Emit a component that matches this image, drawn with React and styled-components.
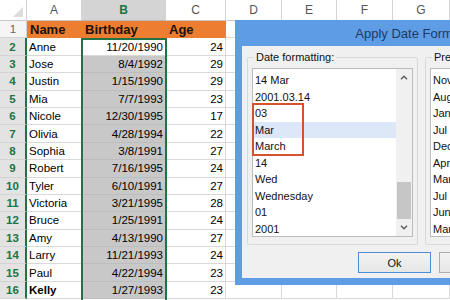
import React from "react";
import styled, { createGlobalStyle } from "styled-components";

const GlobalStyle = createGlobalStyle`
  html, body {
    margin: 0;
    padding: 0;
    background: #ffffff;
  }
  body {
    font-family: "Liberation Sans", Arial, sans-serif;
  }
`;

const columns = ["A", "B", "C", "D", "E", "F", "G"];

const people = [
  ["Anne", "11/20/1990", 24],
  ["Jose", "8/4/1992", 29],
  ["Justin", "1/15/1990", 29],
  ["Mia", "7/7/1993", 23],
  ["Nicole", "12/30/1995", 17],
  ["Olivia", "4/28/1994", 22],
  ["Sophia", "3/8/1991", 27],
  ["Robert", "7/16/1995", 24],
  ["Tyler", "6/10/1991", 27],
  ["Victoria", "3/21/1995", 28],
  ["Bruce", "1/25/1991", 24],
  ["Amy", "4/13/1990", 27],
  ["Larry", "11/21/1993", 24],
  ["Paul", "4/22/1994", 23],
  ["Kelly", "1/27/1993", 23],
];

const formats = ["14 Mar", "2001.03.14", "03", "Mar", "March", "14", "Wed", "Wednesday", "01", "2001"];
const preview = ["Nov", "Aug", "Jan", "Jul", "Dec", "Apr", "Mar", "Jul", "Jun", "Mar"];

export default function App() {
  return (
    <Page>
      <GlobalStyle />
      <Sheet>
        <Corner>
          <svg width="10" height="10" viewBox="0 0 10 10">
            <polygon points="10,0 10,10 0,10" fill="#dcdcdc" />
          </svg>
        </Corner>
        {columns.map((c) => (
          <ColHeader key={c} $active={c === "B"}>{c}</ColHeader>
        ))}

        <RowHeader>1</RowHeader>
        <TitleCell>Name</TitleCell>
        <TitleCell>Birthday</TitleCell>
        <TitleCell>Age</TitleCell>
        <Cell /><Cell /><Cell /><Cell />

        {people.map(([name, date, age], i) => (
          <React.Fragment key={name}>
            <RowHeader $active>{i + 2}</RowHeader>
            <Cell $bold={name === "Kelly"}>{name}</Cell>
            <Cell $align="right" $selected={i > 0}>{date}</Cell>
            <Cell $align="right">{age}</Cell>
            <Cell /><Cell /><Cell /><Cell />
          </React.Fragment>
        ))}
      </Sheet>
      <Selection />

      <Dialog>
        <TitleBar>Apply Date Formatting</TitleBar>
        <DialogBody>
          <Groups>
            <GroupBox>
              <GroupLabel>Date formatting:</GroupLabel>
              <ListBox>
                <ListItems>
                  {formats.map((f, i) => (
                    <ListItem key={f + i} $selected={f === "Mar"}>{f}</ListItem>
                  ))}
                </ListItems>
                <ScrollBar>
                  <ScrollArrow>
                    <svg width="8" height="5" viewBox="0 0 8 5">
                      <polyline points="1,4.2 4,1.2 7,4.2" fill="none" stroke="#5a5a5a" strokeWidth="1.4" />
                    </svg>
                  </ScrollArrow>
                  <ScrollTrack>
                    <ScrollThumb />
                  </ScrollTrack>
                  <ScrollArrow>
                    <svg width="8" height="5" viewBox="0 0 8 5">
                      <polyline points="1,0.8 4,3.8 7,0.8" fill="none" stroke="#5a5a5a" strokeWidth="1.4" />
                    </svg>
                  </ScrollArrow>
                </ScrollBar>
                <Highlight />
              </ListBox>
            </GroupBox>
            <GroupBox>
              <GroupLabel>Preview:</GroupLabel>
              <ListBox>
                <ListItems>
                  {preview.map((p, i) => (
                    <ListItem key={p + i}>{p}</ListItem>
                  ))}
                </ListItems>
              </ListBox>
            </GroupBox>
          </Groups>
          <ButtonRow>
            <Button $focused>Ok</Button>
            <Button>Apply</Button>
            <Button>Cancel</Button>
          </ButtonRow>
        </DialogBody>
      </Dialog>
    </Page>
  );
}

const Page = styled.div`
  position: relative;
  width: 450px;
  height: 300px;
  overflow: hidden;
  background: #ffffff;
`;

const Sheet = styled.div`
  display: grid;
  grid-template-columns: 27px 55px 84px 60px 56px 55px 56px 57px;
  grid-template-rows: 21px repeat(16, 17.4px);
  font-size: 11.5px;
  color: #000000;
`;

const Corner = styled.div`
  display: flex;
  align-items: flex-end;
  justify-content: flex-end;
  padding: 0 3px 3px 0;
  border-right: 1px solid #d4d4d4;
  border-bottom: 1px solid #c8c8c8;
  box-sizing: border-box;
  background: #ffffff;
`;

const ColHeader = styled.div`
  display: flex;
  align-items: center;
  justify-content: center;
  font-size: 12px;
  font-weight: ${(p) => (p.$active ? 700 : 400)};
  color: ${(p) => (p.$active ? "#217346" : "#555555")};
  background: ${(p) => (p.$active ? "#d4d4d4" : "#ffffff")};
  border-right: 1px solid #d4d4d4;
  border-bottom: 1px solid ${(p) => (p.$active ? "#b8b8b8" : "#c8c8c8")};
  box-sizing: border-box;
`;

const RowHeader = styled.div`
  display: flex;
  align-items: center;
  justify-content: center;
  font-weight: ${(p) => (p.$active ? 700 : 400)};
  color: ${(p) => (p.$active ? "#217346" : "#666666")};
  background: ${(p) => (p.$active ? "#e3e3e3" : "#f5f5f5")};
  border-right: ${(p) => (p.$active ? "2px solid #217346" : "1px solid #d4d4d4")};
  border-bottom: 1px solid #d4d4d4;
  box-sizing: border-box;
`;

const TitleCell = styled.div`
  display: flex;
  align-items: center;
  padding: 0 0 0 3px;
  font-size: 13px;
  font-weight: 700;
  color: #1c1208;
  background: #ed7d31;
  box-sizing: border-box;
`;

const Cell = styled.div`
  display: flex;
  align-items: center;
  justify-content: ${(p) => (p.$align === "right" ? "flex-end" : "flex-start")};
  padding: 0 2px;
  font-weight: ${(p) => (p.$bold ? 700 : 400)};
  background: ${(p) => (p.$selected ? "#c8c8c8" : "#ffffff")};
  border-right: 1px solid ${(p) => (p.$selected ? "#bdbdbd" : "#d9d9d9")};
  border-bottom: 1px solid ${(p) => (p.$selected ? "#bdbdbd" : "#d9d9d9")};
  white-space: nowrap;
  box-sizing: border-box;
`;

const Selection = styled.div`
  position: absolute;
  left: 81px;
  top: 37.5px;
  width: 86px;
  height: 280px;
  border: 2px solid #217346;
  box-sizing: border-box;
  pointer-events: none;
`;

const Dialog = styled.div`
  position: absolute;
  left: 235px;
  top: 20px;
  width: 370px;
  height: 265px;
  display: flex;
  flex-direction: column;
  padding: 0 7px 7px 7px;
  box-sizing: border-box;
  background: #5e9de6;
  font-family: "Liberation Sans", Arial, sans-serif;
`;

const TitleBar = styled.div`
  height: 26px;
  display: flex;
  align-items: center;
  justify-content: center;
  font-size: 13px;
  color: #1e3a60;
`;

const DialogBody = styled.div`
  flex: 1;
  display: flex;
  flex-direction: column;
  padding: 11px 5px 0 5px;
  background: #f0f0f0;
  font-size: 11px;
  color: #111111;
`;

const Groups = styled.div`
  display: grid;
  grid-template-columns: 171px 168px;
  gap: 7px;
`;

const GroupBox = styled.div`
  padding: 0 4px 7px 4px;
  border: 1px solid #d9d9d9;
  border-radius: 2px;
  box-sizing: border-box;
`;

const GroupLabel = styled.div`
  width: fit-content;
  margin: -7px 0 0 2px;
  padding: 0 2px;
  line-height: 13px;
  background: #f0f0f0;
`;

const ListBox = styled.div`
  position: relative;
  height: 169px;
  margin-top: 4px;
  display: flex;
  border: 1px solid #bcbcbc;
  background: #ffffff;
  box-sizing: border-box;
  overflow: visible;
`;

const ListItems = styled.div`
  flex: 1;
  padding-top: 3px;
  overflow: hidden;
`;

const ListItem = styled.div`
  height: 16.5px;
  display: flex;
  align-items: center;
  padding-left: 2px;
  white-space: nowrap;
  background: ${(p) => (p.$selected ? "#dce7f7" : "transparent")};
`;

const ScrollBar = styled.div`
  width: 16px;
  display: flex;
  flex-direction: column;
  background: #f0f0f0;
`;

const ScrollArrow = styled.div`
  height: 17px;
  display: flex;
  align-items: center;
  justify-content: center;
`;

const ScrollTrack = styled.div`
  flex: 1;
  display: flex;
  flex-direction: column;
  justify-content: flex-end;
  padding: 0 1px;
`;

const ScrollThumb = styled.div`
  height: 37px;
  background: #c6c6c6;
`;

const Highlight = styled.div`
  position: absolute;
  left: -1px;
  top: 34px;
  width: 52px;
  height: 53px;
  border: 2px solid #d9502e;
  box-sizing: border-box;
  pointer-events: none;
`;

const ButtonRow = styled.div`
  display: flex;
  justify-content: flex-end;
  gap: 8px;
  margin-top: 7px;
  padding-right: 0;
`;

const Button = styled.div`
  width: 73px;
  height: 21px;
  display: flex;
  align-items: center;
  justify-content: center;
  border: 1px solid ${(p) => (p.$focused ? "#4a8fd6" : "#adadad")};
  background: linear-gradient(#f3f3f3, #e6e6e6);
  box-sizing: border-box;
  font-size: 11px;
  color: #111111;
`;
